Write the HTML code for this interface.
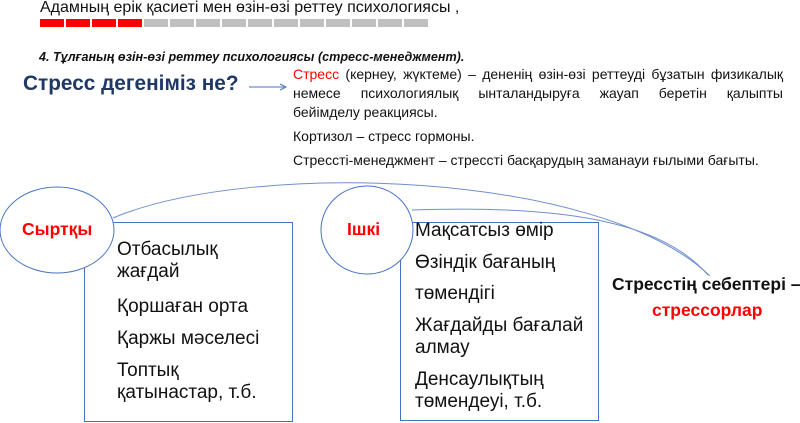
<!DOCTYPE html>
<html><head><meta charset="utf-8"><style>
body{margin:0;width:800px;height:423px;background:#fff;position:relative;overflow:hidden;font-family:"Liberation Sans","DejaVu Sans",sans-serif;color:#111}
.a{position:absolute;white-space:nowrap}
.seg{position:absolute;top:19px;height:8px;width:24px}
.b{font-size:19px;line-height:22px}
.j{position:absolute;left:293px;width:490px;font-size:14px;text-align:justify;text-align-last:justify;white-space:nowrap}
</style></head><body>
<div class="a" style="left:40px;top:-1px;font-size:16px">Адамның ерік қасиеті мен өзін-өзі реттеу психологиясы ,</div>
<div id="bar"></div>
<script>
var h='';for(var i=0;i<15;i++){h+='<div class="seg" style="left:'+(40+i*26)+'px;background:'+(i<4?'#f00':'#c0c0c0')+'"></div>';}
document.getElementById('bar').innerHTML=h;
</script>
<div class="a" style="left:39px;top:50px;font-size:12.6px;font-weight:bold;font-style:italic">4. Тұлғаның өзін-өзі реттеу психологиясы (стресс-менеджмент).</div>
<div class="a" style="left:23px;top:72px;font-size:20.8px;font-weight:bold;color:#1f3864">Стресс дегеніміз не?</div>
<svg class="a" style="left:0;top:0" width="800" height="423">
<line x1="249" y1="87" x2="284" y2="87" stroke="#4472c4" stroke-width="1"/>
<path d="M280 84 L286 87 L280 90" fill="none" stroke="#4472c4"/>
<path d="M113 218 C250 160 600 170 710 276" fill="none" stroke="#6f8fd0" stroke-width="1"/>
<path d="M412 210 C560 205 660 220 708 275" fill="none" stroke="#6f8fd0" stroke-width="1"/>
<rect x="84.5" y="222.5" width="208" height="199" fill="none" stroke="#4472c4"/>
<rect x="400.5" y="222.5" width="198" height="198" fill="none" stroke="#4472c4"/>
<ellipse cx="57" cy="230" rx="57" ry="43" fill="#fff" stroke="#4472c4"/>
<ellipse cx="367" cy="230" rx="46" ry="44" fill="#fff" stroke="#4472c4"/>
</svg>
<div class="j" style="top:66px"><span style="color:#f00">Стресс</span> (кернеу, жүктеме) – дененің өзін-өзі реттеуді бұзатын физикалық</div>
<div class="j" style="top:85px">немесе психологиялық ынталандыруға жауап беретін қалыпты</div>
<div class="a" style="left:293px;top:104px;font-size:14px">бейімделу реакциясы.</div>
<div class="a" style="left:293px;top:128px;font-size:14px">Кортизол – стресс гормоны.</div>
<div class="a" style="left:293px;top:152px;font-size:14px">Стрессті-менеджмент – стрессті басқарудың заманауи ғылыми бағыты.</div>
<div class="a" style="left:22px;top:219px;font-size:17.5px;font-weight:bold;color:#f00">Сыртқы</div>
<div class="a" style="left:347px;top:219px;font-size:17.5px;font-weight:bold;color:#f00">Ішкі</div>
<div class="a b" style="left:117px;top:239px">Отбасылық<br>жағдай</div>
<div class="a b" style="left:117px;top:296px">Қоршаған орта</div>
<div class="a b" style="left:117px;top:328px">Қаржы мәселесі</div>
<div class="a b" style="left:117px;top:360px">Топтық<br>қатынастар, т.б.</div>
<div class="a b" style="left:415px;top:220px">Мақсатсыз өмір</div>
<div class="a b" style="left:415px;top:252px">Өзіндік бағаның</div>
<div class="a b" style="left:415px;top:283px">төмендігі</div>
<div class="a b" style="left:415px;top:315px">Жағдайды бағалай<br>алмау</div>
<div class="a b" style="left:415px;top:369px">Денсаулықтың<br>төмендеуі, т.б.</div>
<div class="a" style="left:612px;top:274px;font-size:17.5px;font-weight:bold">Стресстің себептері –</div>
<div class="a" style="left:652px;top:300px;font-size:17.5px;font-weight:bold;color:#f00">стрессорлар</div>
</body></html>
